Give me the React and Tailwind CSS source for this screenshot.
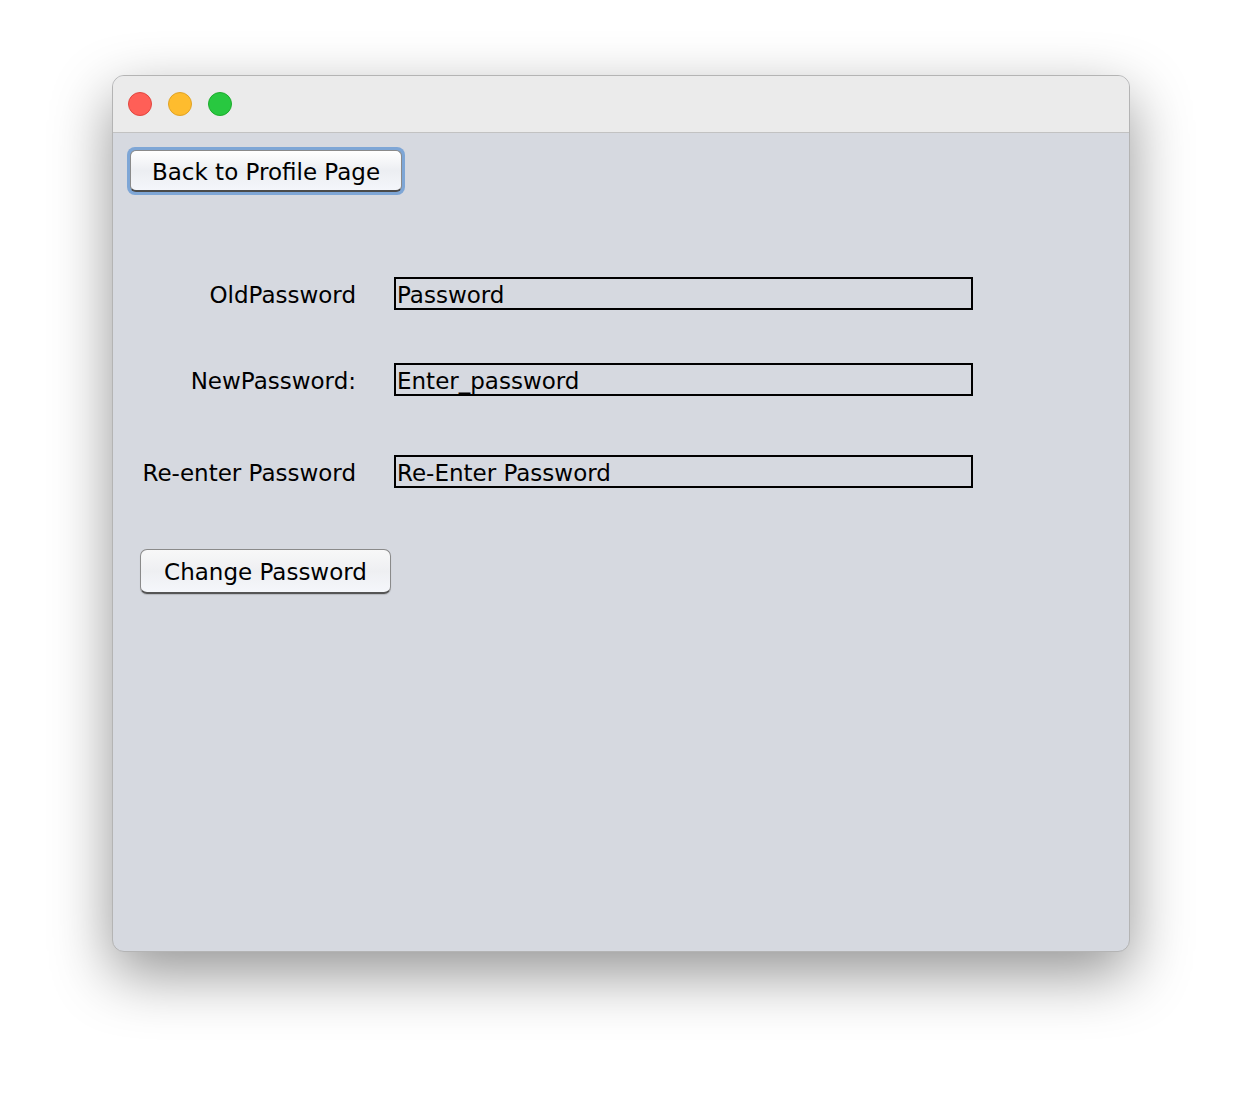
import React from "react";

const font = { fontFamily: '"DejaVu Sans", "Liberation Sans", sans-serif' };

function Field({ label, value }) {
  return (
    <div className="flex items-center">
      <div className="w-[229px] pt-[3px] text-right text-[23px] leading-none text-black">{label}</div>
      <div className="ml-[38px] w-[579px] h-[33px] border-2 border-black flex items-center pl-[1px] pt-[3px] text-[23px] leading-none text-black">
        {value}
      </div>
    </div>
  );
}

export default function App() {
  return (
    <div className="w-[1242px] h-[1100px] bg-white pl-[112px] pt-[75px]" style={font}>
      <div className="w-[1018px] h-[877px] rounded-[12px] overflow-hidden border border-[#b4b4b4] bg-[#d6d9e0] shadow-[0_22px_60px_rgba(0,0,0,0.42)] flex flex-col">
        <div className="h-[57px] bg-[#ebebeb] border-b border-[#c2c2c2] flex items-center pl-[15px] gap-[16px] shrink-0">
          <div className="w-[24px] h-[24px] rounded-full bg-[#ff5f57] border border-[#e2463f]" />
          <div className="w-[24px] h-[24px] rounded-full bg-[#febc2e] border border-[#e1a325]" />
          <div className="w-[24px] h-[24px] rounded-full bg-[#28c840] border border-[#1dac2c]" />
        </div>
        <div className="flex flex-col pl-[14px] pt-[14px]">
          <div className="w-[278px] h-[48px] rounded-[8px] bg-[#7ea6d6] p-[3px]">
            <div className="w-full h-full rounded-[6px] border border-[#8a8a8a] border-b-[#4a4a4a] border-b-2 bg-gradient-to-b from-[#ffffff] via-[#eceef2] to-[#f4f6fb] flex items-center justify-center pt-[3px] text-[23px] leading-none text-black">
              Back to Profile Page
            </div>
          </div>
          <div className="mt-[82px]">
            <Field label="OldPassword" value="Password" />
          </div>
          <div className="mt-[53px]">
            <Field label="NewPassword:" value="Enter_password" />
          </div>
          <div className="mt-[59px]">
            <Field label="Re-enter Password" value="Re-Enter Password" />
          </div>
          <div className="mt-[61px] ml-[13px] w-[251px] h-[45px] rounded-[7px] border border-[#8a8a8a] border-b-[#555555] border-b-2 bg-gradient-to-b from-[#f8f8f8] via-[#eeeff2] to-[#f5f7fb] shadow-[0_1px_1px_rgba(0,0,0,0.15)] flex items-center justify-center pt-[3px] text-[23px] leading-none text-black">
            Change Password
          </div>
        </div>
      </div>
    </div>
  );
}
